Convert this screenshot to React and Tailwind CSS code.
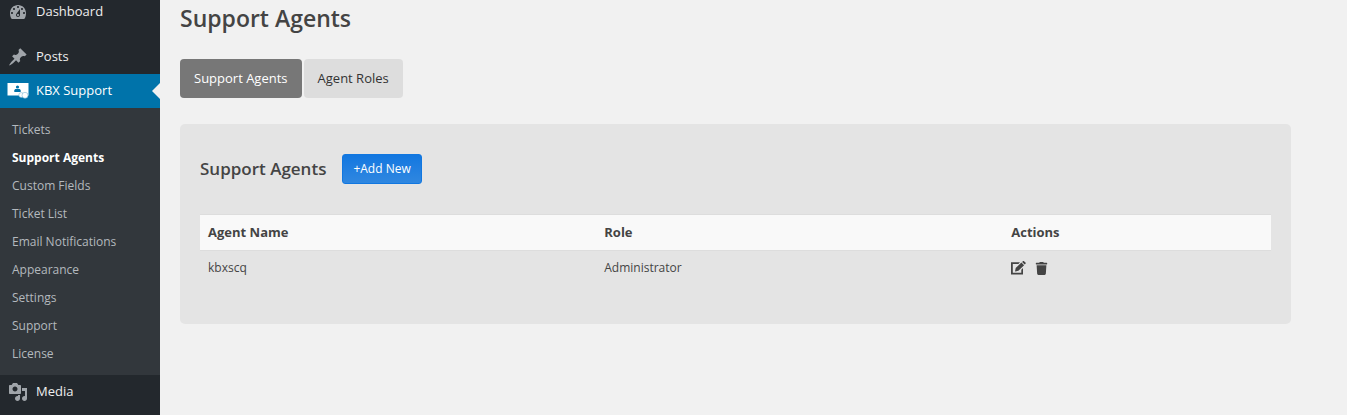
import React, { useState } from 'react'
import { FaTrash } from 'react-icons/fa'

const DashboardIcon = () => (
  <svg viewBox="0 0 20 20" className="w-5 h-5" fill="currentColor" fillRule="evenodd" aria-hidden="true">
    <path d="M3.76 17h12.48c1.34-1.63 1.76-3.73 1.76-6 0-4.42-3.58-8-8-8s-8 3.58-8 8c0 2.27.42 4.37 1.76 6zM10 4c.55 0 1 .45 1 1s-.45 1-1 1-1-.45-1-1 .45-1 1-1zM6 6c.55 0 1 .45 1 1s-.45 1-1 1-1-.45-1-1 .45-1 1-1zm8 0c.55 0 1 .45 1 1s-.45 1-1 1-1-.45-1-1 .45-1 1-1zm-5.37 5.55L12 7v6c0 1.1-.9 2-2 2s-2-.9-2-2c0-.57.24-1.08.63-1.45zM4 10c.55 0 1 .45 1 1s-.45 1-1 1-1-.45-1-1 .45-1 1-1zm12 0c.55 0 1 .45 1 1s-.45 1-1 1-1-.45-1-1 .45-1 1-1zm-5 3c0-.55-.45-1-1-1s-1 .45-1 1 .45 1 1 1 1-.45 1-1z" />
  </svg>
)

const PinIcon = () => (
  <svg viewBox="0 0 20 20" className="w-5 h-5" fill="currentColor" aria-hidden="true">
    <path d="M10.44 3.02l1.82-1.82 6.36 6.35-1.83 1.82c-1.05-.68-2.48-.57-3.41.36l-.75.75c-.92.93-1.04 2.35-.35 3.41l-1.83 1.82-2.41-2.41-2.8 2.79c-.42.42-3.38 2.71-3.8 2.29s1.86-3.39 2.28-3.81l2.79-2.79L4.1 9.36l1.83-1.82c1.05.69 2.48.57 3.4-.36l.75-.75c.93-.92 1.05-2.35.36-3.41z" />
  </svg>
)

const MediaIcon = () => (
  <svg viewBox="0 0 20 20" className="w-5 h-5" fill="currentColor" fillRule="evenodd" aria-hidden="true">
    <path d="M13 11V4c0-.55-.45-1-1-1h-1.67L9 1H5L3.67 3H2c-.55 0-1 .45-1 1v7c0 .55.45 1 1 1h10c.55 0 1-.45 1-1zM7 4.5c1.38 0 2.5 1.12 2.5 2.5S8.38 9.5 7 9.5 4.5 8.38 4.5 7 5.62 4.5 7 4.5zM14 6h5v10.5c0 1.38-1.12 2.5-2.5 2.5S14 17.88 14 16.5s1.12-2.5 2.5-2.5c.17 0 .34.02.5.05V9h-3V6zm-4 8.05V13h2v3.5c0 1.38-1.12 2.5-2.5 2.5S7 17.88 7 16.5 8.12 14 9.5 14c.17 0 .34.02.5.05z" />
  </svg>
)

// Screen with a person and two chat bubbles
const SupportIcon = () => (
  <svg viewBox="0 0 22 16" className="w-[22px] h-4" aria-hidden="true">
    <path d="M.5 0h21v12.5H.5z" fill="#fff" />
    <circle cx="10.5" cy="4" r="1.6" fill="#0073aa" />
    <path d="M7.3 9V7.6c0-1 .8-1.6 1.8-1.6h2.8c1 0 1.8.6 1.8 1.6V9z" fill="#0073aa" />
    <circle cx="14.2" cy="12" r="2.4" fill="#fff" stroke="#7fb9d4" strokeWidth=".6" />
    <circle cx="18" cy="12.3" r="3" fill="#fff" stroke="#7fb9d4" strokeWidth=".6" />
  </svg>
)

const EditIcon = () => (
  <svg viewBox="0 0 16 14" className="w-4 h-[14px]" fill="currentColor" aria-hidden="true">
    <path d="M0 1.2h9L7.4 3H1.8v8.7h8.5V8.8L12 7.1v6.4H0z" />
    <path d="M4 10.6l.7-3.5 5.7-5.6 2.7 2.7-5.7 5.6zM11.1 .9l.8-.7c.3-.3.8-.3 1.1 0l1.5 1.4c.3.3.3.8 0 1.1l-.8.8z" />
  </svg>
)

const submenu = [
  'Tickets',
  'Support Agents',
  'Custom Fields',
  'Ticket List',
  'Email Notifications',
  'Appearance',
  'Settings',
  'Support',
  'License',
]

const agents = [{ name: 'kbxscq', role: 'Administrator' }]

const MenuItem = ({ icon, label, active = false }) => (
  <a
    href="#"
    className={`relative flex items-center h-[34px] text-[13px] ${
      active ? 'bg-[#0073aa] text-white' : 'text-[#eeeeee]'
    }`}
  >
    <span className={`flex w-9 justify-center ${active ? 'text-white' : 'text-[#a0a5aa]'}`}>{icon}</span>
    {label}
    {active && (
      <span className="absolute right-0 top-1/2 -translate-y-1/2 border-8 border-transparent border-r-[#f1f1f1]" />
    )}
  </a>
)

const Sidebar = () => (
  <nav className="w-40 shrink-0 bg-[#23282d]">
    <div className="-mt-[5px] mb-[11px]">
      <MenuItem icon={<DashboardIcon />} label="Dashboard" />
    </div>
    <MenuItem icon={<PinIcon />} label="Posts" />
    <MenuItem icon={<SupportIcon />} label="KBX Support" active />
    <ul className="bg-[#32373c] pt-2 pb-[7px] text-xs">
      {submenu.map((item) => (
        <li key={item}>
          <a
            href="#"
            className={`flex items-center h-7 px-3 ${
              item === 'Support Agents' ? 'font-bold text-white' : 'text-[#b4b9be]'
            }`}
          >
            {item}
          </a>
        </li>
      ))}
    </ul>
    <MenuItem icon={<MediaIcon />} label="Media" />
  </nav>
)

const App = () => {
  const [tab, setTab] = useState('Support Agents')

  return (
    <div className="flex min-h-screen overflow-hidden bg-[#f1f1f1] font-['Open_Sans','Noto_Sans',sans-serif] text-[13px] text-[#444444]">
      <Sidebar />

      <main className="flex-1 pl-5 pr-14">
        <h1 className="pt-1 text-[23px] leading-7 font-semibold">Support Agents</h1>

        {/* Tabs */}
        <div className="mt-[27px] flex gap-[2px]">
          {['Support Agents', 'Agent Roles'].map((name) => (
            <button
              key={name}
              type="button"
              onClick={() => setTab(name)}
              className={`h-[39px] pt-px px-[14px] rounded cursor-pointer ${
                tab === name ? 'bg-[#777777] text-white' : 'bg-[#dddddd] text-[#333333]'
              }`}
            >
              {name}
            </button>
          ))}
        </div>

        <section className="mt-[26px] rounded-[5px] bg-[#e4e4e4] px-5 pt-[30px] pb-[38px]">
          <div className="flex items-center gap-4">
            <h2 className="text-[17px] leading-7 font-semibold">Support Agents</h2>
            <button
              type="button"
              className="h-[30px] px-[10px] rounded-[3px] border border-[#1177e0] bg-linear-to-b from-[#1177e0] to-[#2f87e0] text-xs text-white cursor-pointer"
            >
              +Add New
            </button>
          </div>

          <table className="mt-[30px] w-full table-fixed text-left">
            <thead>
              <tr className="h-9 border-y border-[#dddddd] bg-[#f9f9f9]">
                <th className="w-[37%] px-2 font-bold">Agent Name</th>
                <th className="w-[38%] px-2 font-bold">Role</th>
                <th className="px-2 font-bold">Actions</th>
              </tr>
            </thead>
            <tbody className="text-xs">
              {agents.map((agent) => (
                <tr key={agent.name} className="h-[35px]">
                  <td className="px-2">{agent.name}</td>
                  <td className="px-2">{agent.role}</td>
                  <td className="px-2">
                    <div className="flex items-center gap-2">
                      <button type="button" aria-label="Edit" className="cursor-pointer">
                        <EditIcon />
                      </button>
                      <button type="button" aria-label="Delete" className="cursor-pointer">
                        <FaTrash className="w-[13px] h-[13px]" />
                      </button>
                    </div>
                  </td>
                </tr>
              ))}
            </tbody>
          </table>
        </section>
      </main>
    </div>
  )
}

export default App
